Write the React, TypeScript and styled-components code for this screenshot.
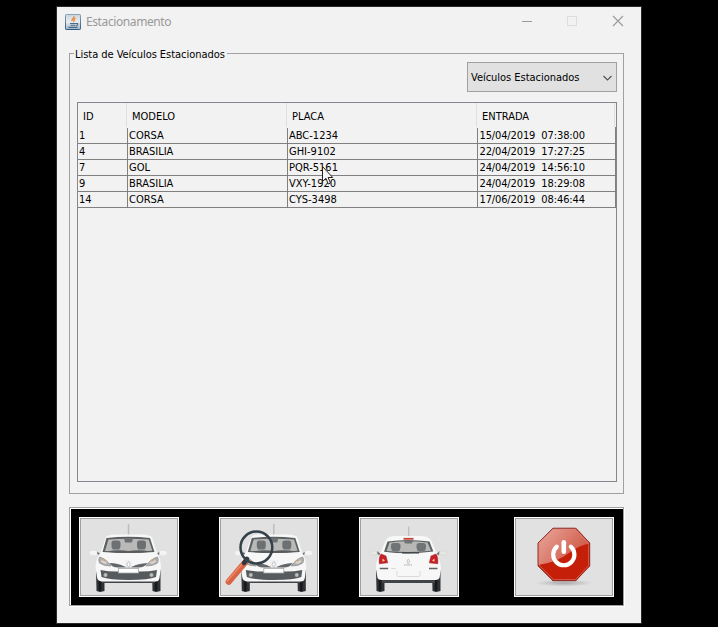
import React from "react";
import styled, { createGlobalStyle } from "styled-components";

const GlobalStyle = createGlobalStyle`
  * { box-sizing: border-box; }
  body { margin: 0; background: #000; overflow: hidden; }
`;

const Desktop = styled.div`
  position: relative;
  width: 718px;
  height: 627px;
  padding: 6px 0 0 56px;
  background: #000;
  color: #000;
  font: 11px/16px "DejaVu Sans Condensed", "DejaVu Sans", sans-serif;
`;

const Window = styled.main`
  width: 586px;
  height: 618px;
  border: 1px solid #2b2b2b;
  background: #f2f2f2;
  padding: 0 0 0 12px;
`;

const TitleBar = styled.header`
  height: 30px;
  margin-left: -4px;
  padding-bottom: 1px;
  display: flex;
  align-items: center;
`;

const Title = styled.span`
  flex: 1;
  margin-left: 5px;
  color: #999;
  font: 12px/16px "Noto Sans", "Open Sans", sans-serif;
  letter-spacing: -0.4px;
`;

const Controls = styled.svg`
  width: 120px;
  height: 30px;
  display: block;
`;

const Group = styled.section`
  position: relative;
  width: 555px;
  height: 441px;
  margin-top: 16px;
  border: 1px solid #a0a0a0;
  padding: 8px 6px 0 7px;
  display: flex;
  flex-direction: column;
  align-items: flex-end;
  gap: 10px;
`;

const Label = styled.span<{ $spacing?: number }>`
  letter-spacing: ${(p) => p.$spacing ?? 0}px;
  white-space: pre;
`;

const Legend = styled.div`
  position: absolute;
  left: 4px;
  top: -7px;
  width: 153px;
  height: 16px;
  padding-left: 1px;
  background: #f2f2f2;
`;

const Select = styled.button`
  width: 150px;
  height: 30px;
  flex: none;
  padding: 2px 4px 0 3px;
  display: flex;
  align-items: center;
  justify-content: space-between;
  border: 1px solid #a0a0a0;
  background: #e1e1e1;
  color: inherit;
  font: inherit;
`;

const TablePane = styled.div`
  width: 540px;
  height: 380px;
  border: 1px solid #828790;
`;

const HeaderRow = styled.div`
  display: grid;
  grid-template-columns: 49px 160px 190px 138px;
  height: 24px;
`;

const HeaderCell = styled.div`
  padding: 6px 0 0 5px;
  border-right: 1px solid #dedfe0;
`;

const Rows = styled.div`
  width: 538px;
  padding-top: 1px;
  border-right: 1px solid #808080;
`;

const Row = styled.div`
  display: grid;
  grid-template-columns: 50px 160px 190px 137px;
  height: 16px;
  border-bottom: 1px solid #808080;
`;

const Cell = styled.div<{ $last?: boolean }>`
  height: 16px;
  padding-left: ${(p) => (p.$last ? 1.5 : 1)}px;
  line-height: 16px;
  display: flex;
  gap: 6px;
  border-right: ${(p) => (p.$last ? "0" : "1px solid #808080")};
`;

const ActionBar = styled.nav`
  width: 555px;
  height: 99px;
  margin-top: 13px;
  border: 1px solid #a0a0a0;
  background: #000;
  box-shadow: inset 1px 1px #fff, 1px 1px #fff;
  display: grid;
  grid-template-columns: 140px 140px 155px 100px;
  padding: 9px 9px 0;
`;

const Action = styled.button`
  width: 100px;
  height: 80px;
  padding: 0;
  border: 1px solid #fff;
  background: #e1e1e1;
  box-shadow: inset 0 0 0 1px #a0a0a0;
`;

const Art = styled.svg`
  display: block;
  width: 98px;
  height: 78px;
`;

const Pointer = styled.svg`
  position: absolute;
  left: 321px;
  top: 165px;
  width: 13px;
  height: 21px;
`;

const JavaIcon = () => (
  <svg width="16" height="16" viewBox="0 0 16 16">
    <defs>
      <linearGradient id="java" x2="0" y2="1">
        <stop stopColor="#cbd5dc" />
        <stop offset=".5" stopColor="#e9eef1" />
        <stop offset="1" stopColor="#9eb4c4" />
      </linearGradient>
      <linearGradient id="edge" x2="0" y2="1">
        <stop stopColor="#8ba3b7" />
        <stop offset="1" stopColor="#315b83" />
      </linearGradient>
    </defs>
    <rect x=".5" y=".5" width="15" height="15" rx=".7" fill="url(#java)" stroke="url(#edge)" />
    <path d="M9 2.2C10 4 6 5 7 7.2M10.5 4.4C8 5.5 9.8 6.5 8.4 8" fill="none" stroke="#ee8432" strokeWidth="1.3" />
    <path d="M5 9.5h6M5.5 11.3h5M3.5 13.4h9M11 9.5c2.7-.4 2.4 1.8 0 2.1" fill="none" stroke="#486c8c" strokeWidth="1.1" />
  </svg>
);

const Wheels = () => (
  <>
    <path d="M16 52h8.5v21q-4 1.5-8 0zM72 52h8.5v21q-4 1.5-8 0z" fill="#303235" />
    <path d="M20 62v11.5M76 62v11.5" stroke="#17191b" strokeWidth="2.6" />
    <path d="M22 60h53v5H22z" fill="#424547" />
  </>
);

const FrontCar = () => (
  <>
    <path d="M48.5 6v11" stroke="#bcbcbc" strokeWidth="1.5" />
    <path d="M17 34.5l4 3 4-3M80 34.5l-4 3-4-3" stroke="#6b6e70" strokeWidth="1.6" fill="none" />
    <ellipse cx="13.5" cy="35" rx="3.8" ry="2.3" fill="#f4f4f4" />
    <ellipse cx="83" cy="35" rx="3.8" ry="2.3" fill="#f4f4f4" />
    <Wheels />
    <path d="M26 19q2-2.5 9-2.5h27q7 0 10 2.5l5 16q3.5 5 4 14l-1.5 11q-.5 3.5-4 3.5H21.500q-4-.5-4.500-4l-1.500-10q.5-10 5-15z" fill="#f7f7f7" />
    <path d="M26.500 20Q48 17.500 70 20l4.500 14Q48 36 22.500 34z" fill="#5c6062" />
    <path d="M28.400 21.500Q48 19.800 68.700 21.500l3.600 11.300Q48 34.500 25 33z" fill="#b9bab8" />
    <path d="M44 20h9l-1 4.500h-7zM31.500 25q0-2.500 2.500-2.500h4q2.500 0 2.500 2.500v3q0 2-1.500 3.500h-6q-1.500-1.500-1.500-3.500zM57 25q0-2.500 2.500-2.500h4q2.500 0 2.500 2.500v3q0 2-1.500 3.500h-6q-1.500-1.500-1.500-3.500z" fill="#6d7072" />
    <path d="M26 33.700q11-2.500 22.500-.8 12-1.700 22.500.8-22 2.600-45 0z" fill="#585c5e" />
    <path d="M19.500 39q7 2 11.500 9-7.500 0-11.500-3-1.500-3 0-6zM77.500 39q-7 2-11.500 9 7.500 0 11.500-3 1.500-3 0-6z" fill="#b0b1ae" stroke="#8e9191" strokeWidth=".8" />
    <path d="M20.500 43.500l4 2.500 3-1-4-4zM76.500 43.500l-4 2.500-3-1 4-4z" fill="#d4d5d2" />
    <path d="M23 41.500l2.500 1.500M74 41.500L71.500 43" stroke="#dda069" strokeWidth="1.6" />
    <path d="M29.500 45q9 0 15 3.500h8q5-3 15-3.500-3 4.500-9 4.500H38q-6 0-8.500-4.500z" fill="#63676a" />
    <path d="M44.500 42h8l-1 7.500h-6z" fill="#f1f1f1" />
    <path d="M48.500 43.500l1.700 2.800-1.700 3.200-1.700-3.200z" fill="#fff" stroke="#b5b5b5" strokeWidth=".8" />
    <path d="M20.500 52q8 1.500 15.500 1.500h25q8 0 16-1.500l-1 7q-7 3-27 3t-27.500-3z" fill="#565b5d" />
    <circle cx="25.500" cy="57" r="1.900" fill="#c0c2c2" stroke="#888" strokeWidth=".5" />
    <circle cx="71.500" cy="57" r="1.900" fill="#c0c2c2" stroke="#888" strokeWidth=".5" />
    <rect x="38.500" y="50.500" width="20" height="4.500" fill="#fff" stroke="#a6a7a7" strokeWidth=".8" />
  </>
);

const RearCar = () => (
  <>
    <path d="M48.7 8.5v11" stroke="#bcbcbc" strokeWidth="1.3" />
    <path d="M17 34l3 3 4-2M80 34l-3 3-4-2" stroke="#777" strokeWidth="2" fill="none" />
    <ellipse cx="13.5" cy="35" rx="3.7" ry="2.2" fill="#e7e7e4" stroke="#cecfcb" strokeWidth=".5" />
    <ellipse cx="83" cy="35" rx="3.7" ry="2.2" fill="#e7e7e4" stroke="#cecfcb" strokeWidth=".5" />
    <Wheels />
    <path d="M26 22q2-4 10-4h25q7 0 10 4l6 14q3.500 6 4 15l-1.500 9q-1 2-4 2H21.500q-3 0-4-2l-1.500-9q0-9 4-15z" fill="#f7f7f7" />
    <path d="M27.5 23.5Q48 20.500 69.500 23.500l3.800 10Q49 37 24 33.800z" fill="#5c6062" />
    <path d="M29.500 24.500Q48 22 67.500 24.500l3.500 8.200Q49 35 26.500 33z" fill="#b8b9b7" />
    <path d="M44 22.500h9l-1 3h-7zM31 27.500q0-2.500 2.500-2.500h4.500q2.500 0 2.500 2.500v2q0 2-2 4h-5.500q-2-2-2-4zM56.500 27.500q0-2.500 2.500-2.500h4.500q2.500 0 2.500 2.500v2q0 2-2 4h-5.500q-2-2-2-4z" fill="#707476" />
    <path d="M43.500 20.800h10" stroke="#c6403a" strokeWidth="1.800" />
    <path d="M42 34.800h17" stroke="#414648" strokeWidth="1.500" />
    <path d="M21 36l5 2 1.700 6.800-8.400 1q-1-6 1.700-9.800zM76 36l-5 2-1.700 6.800 8.400 1q1-6-1.700-9.800z" fill="#c82028" stroke="#a52b30" strokeWidth=".6" />
    <path d="M22.500 40.500l2.500 2-2.500 1.200zM74.500 40.500l-2.500 2 2.500 1.200z" fill="#f6ce93" />
    <path d="M19.700 50.500h8.500M69 50.500h8.500" stroke="#606466" strokeWidth="1.700" />
    <path d="M48.300 41l1.500 2.500-1.500 2.800-1.500-2.800z" fill="#eee" stroke="#bcbcbc" strokeWidth=".8" />
    <path d="M44 47h8" stroke="#aaa" strokeWidth="1.200" strokeDasharray="1.5 .7" />
    <path d="M37 53v4.500q0 1 2 1h19q2 0 2-1V53M31 50.500h5" fill="none" stroke="#dadada" />
  </>
);

const Magnifier = () => (
  <>
    <path d="M25 44.500L8.700 63.700" stroke="#d76444" strokeWidth="6.200" strokeLinecap="round" />
    <path d="M23 45L7.200 63" stroke="#f28360" strokeWidth="1.800" strokeLinecap="round" />
    <path d="M24 45L27 41" stroke="#273943" strokeWidth="4.500" strokeLinecap="round" />
    <circle cx="36.400" cy="29.500" r="15.900" fill="none" stroke="#344149" strokeWidth="2.500" />
  </>
);

const PowerArt = () => (
  <Art viewBox="0 0 98 78">
    <defs>
      <linearGradient id="gloss" x1="0" y1=".1" x2="1" y2=".7">
        <stop stopColor="#e9a99d" />
        <stop offset="1" stopColor="#cc4e3d" />
      </linearGradient>
      <radialGradient id="shadow">
        <stop stopColor="#aaa" />
        <stop offset="1" stopColor="#aaa" stopOpacity="0" />
      </radialGradient>
      <clipPath id="octagon"><path d="M38 10h23l14 15v23L61 63H38L23 48V25z" /></clipPath>
    </defs>
    <ellipse cx="49" cy="65" rx="29" ry="3.4" fill="url(#shadow)" />
    <g clipPath="url(#octagon)">
      <path d="M22 9h54v55H22z" fill="#c61f09" />
      <path d="M22 9h54v16Q64 27 54 35 41 45 22 47z" fill="url(#gloss)" />
      <path d="M38.500 11.300h22L73.700 25.500v22L60.500 61.700h-22L24.300 47.500v-22z" fill="none" stroke="#e98171" strokeOpacity=".65" strokeWidth="1" />
    </g>
    <path d="M38 10.200h22.500L74.700 25v22.800L60.500 62.700H38L23 47.800V25z" fill="none" stroke="#863030" strokeWidth="1" />
    <path d="M41.800 28.700a10.600 10.600 0 1 0 14 0" fill="none" stroke="#fff" strokeWidth="4.200" strokeLinecap="round" />
    <path d="M48.800 24.200v9.600" stroke="#fff" strokeWidth="4.600" strokeLinecap="round" />
  </Art>
);

const headings = ["ID", "MODELO", "PLACA", "ENTRADA"];

const vehicles = [
  ["1", "CORSA", "ABC-1234", "15/04/2019", "07:38:00"],
  ["4", "BRASILIA", "GHI-9102", "22/04/2019", "17:27:25"],
  ["7", "GOL", "PQR-5161", "24/04/2019", "14:56:10"],
  ["9", "BRASILIA", "VXY-1920", "24/04/2019", "18:29:08"],
  ["14", "CORSA", "CYS-3498", "17/06/2019", "08:46:44"],
];

export default function App() {
  return (
    <>
      <GlobalStyle />
      <Desktop>
        <Window>
          <TitleBar>
            <JavaIcon />
            <Title>Estacionamento</Title>
            <Controls viewBox="0 0 120 30" fill="none">
              <path d="M1 14.500h10" stroke="#999" />
              <rect x="46.500" y="9.500" width="9" height="9" stroke="#dedede" />
              <path d="M92 9l10 10M102 9l-10 10" stroke="#999" strokeWidth="1.100" />
            </Controls>
          </TitleBar>
          <Group>
            <Legend><Label $spacing={-0.04}>Lista de Veículos Estacionados</Label></Legend>
            <Select>
              <Label $spacing={-0.03}>Veículos Estacionados</Label>
              <svg width="9" height="6" viewBox="0 0 9 6"><path d="M.5 1l4 4 4-4" fill="none" stroke="#555" strokeWidth="1.2" /></svg>
            </Select>
            <TablePane>
              <HeaderRow>
                {headings.map((heading) => <HeaderCell key={heading}><Label>{heading}</Label></HeaderCell>)}
              </HeaderRow>
              <Rows>
                {vehicles.map(([id, model, plate, date, time]) => (
                  <Row key={id}>
                    <Cell><Label>{id}</Label></Cell>
                    <Cell><Label>{model}</Label></Cell>
                    <Cell><Label>{plate}</Label></Cell>
                    <Cell $last><Label $spacing={-0.13}>{date}</Label><Label $spacing={-0.08}>{time}</Label></Cell>
                  </Row>
                ))}
              </Rows>
            </TablePane>
          </Group>
          <ActionBar>
            <Action aria-label="Entrada"><Art viewBox="0 0 98 78"><FrontCar /></Art></Action>
            <Action aria-label="Pesquisar">
              <Art viewBox="0 0 98 78">
                <g transform="translate(5.3 0)"><FrontCar /></g>
                <Magnifier />
              </Art>
            </Action>
            <Action aria-label="Saída"><Art viewBox="0 0 98 78"><RearCar /></Art></Action>
            <Action aria-label="Desligar"><PowerArt /></Action>
          </ActionBar>
        </Window>
        <Pointer viewBox="0 0 13 21">
          <path d="M1.500 1.500v15l3.400-3.200 2.400 5.700 2.200-1-2.400-5.500h4.600z" fill="#f5f5f5" stroke="#222" />
        </Pointer>
      </Desktop>
    </>
  );
}
